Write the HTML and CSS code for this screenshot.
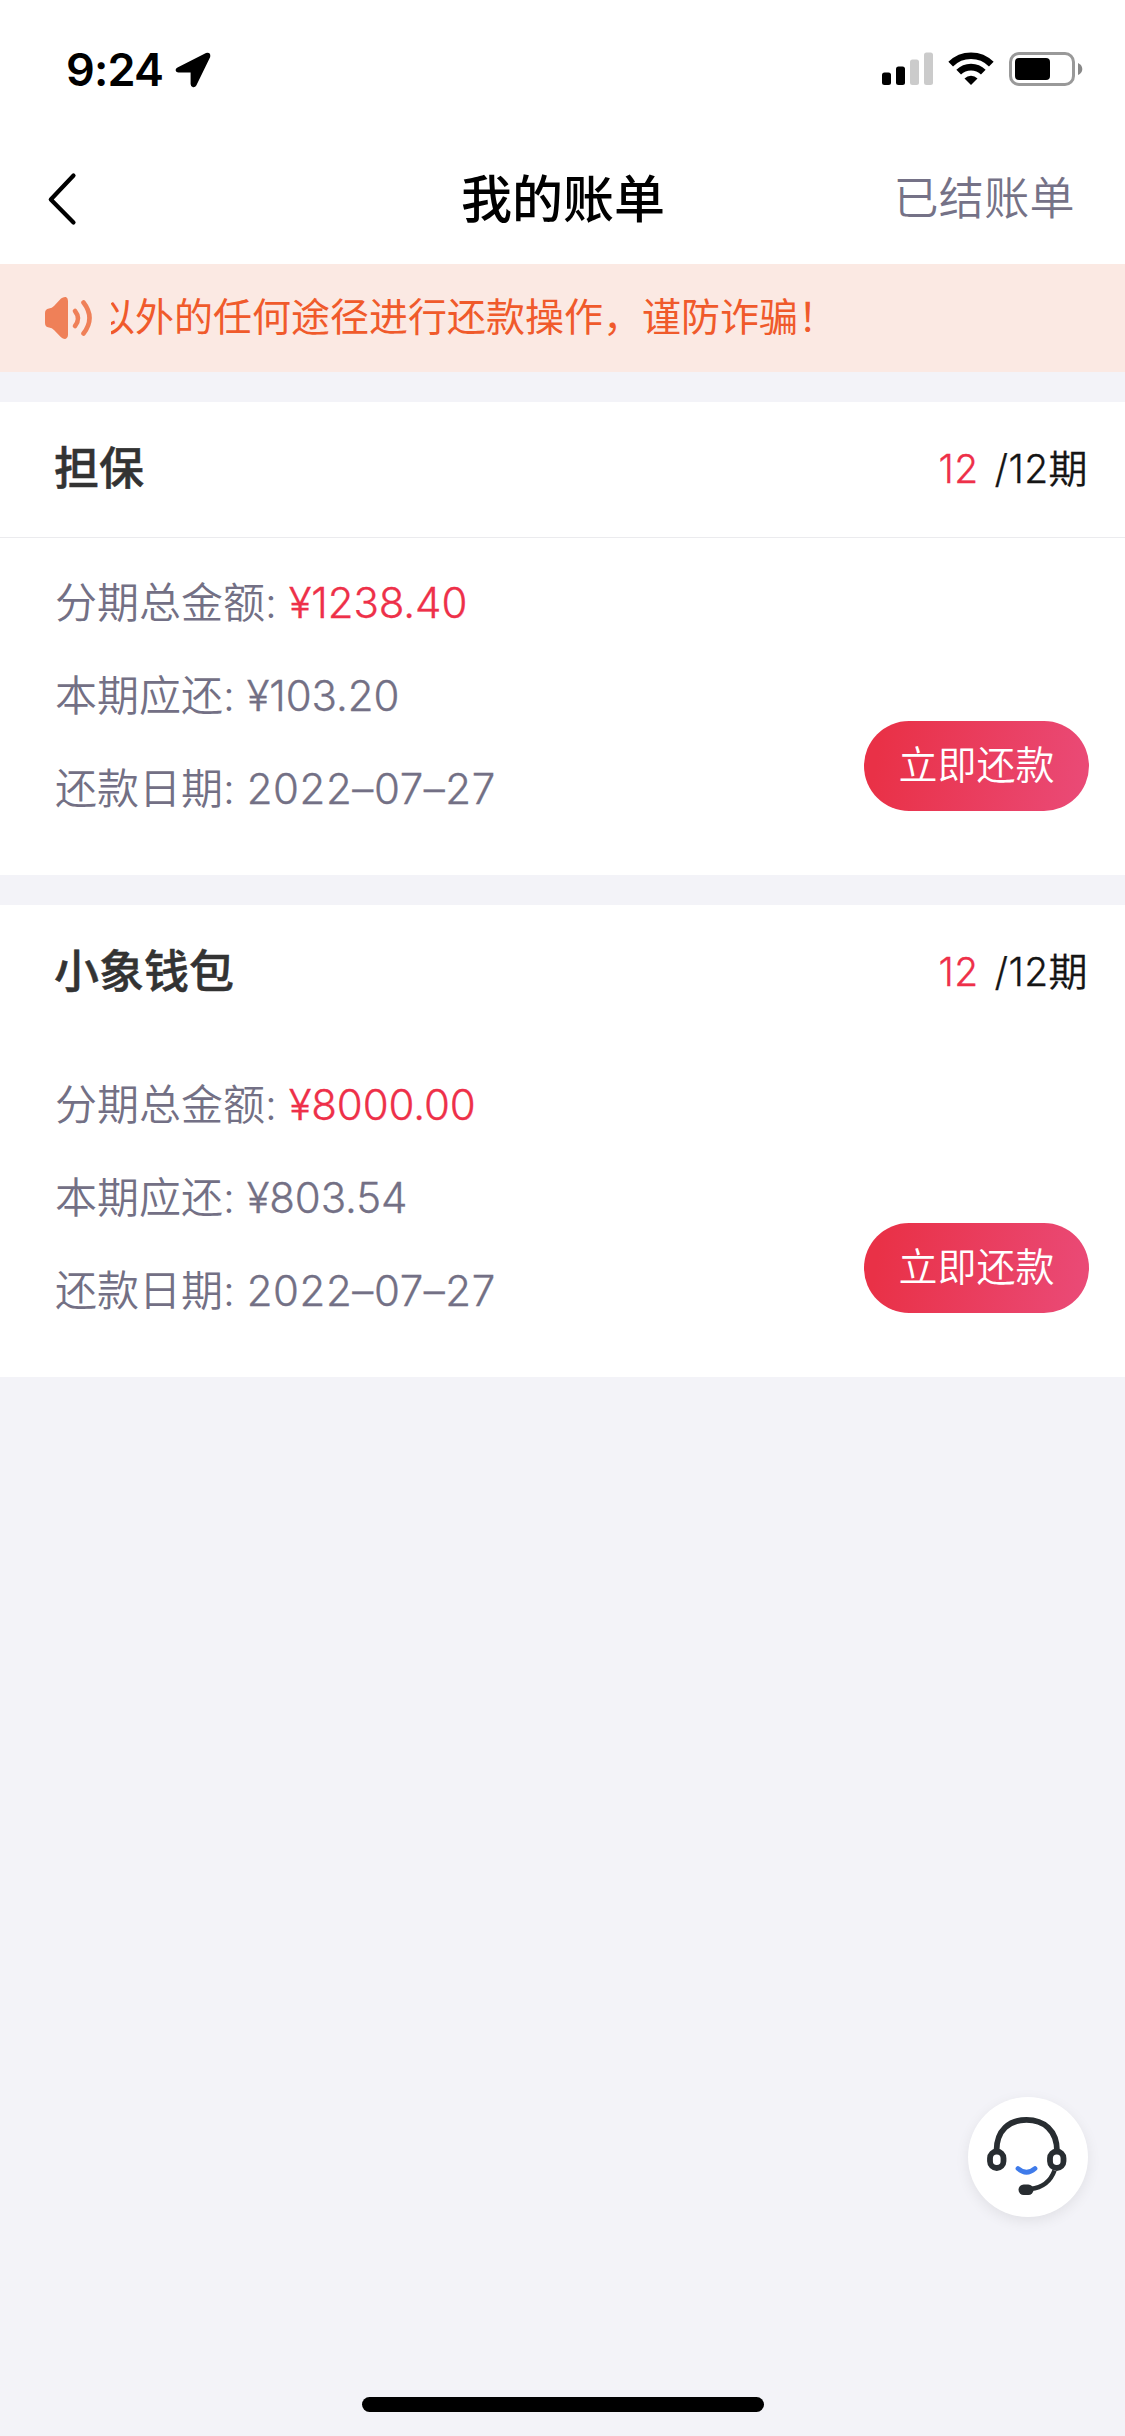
FILE: index.html
```html
<!DOCTYPE html>
<html lang="zh-CN">
<head>
<meta charset="utf-8">
<title>我的账单</title>
<link rel="stylesheet" href="styles.css">
</head>
<body>
<div class="screen">
  <header class="status">
    <div class="status-left">
      <span class="time">9:24</span>
      <svg class="location" width="36" height="36" viewBox="0 0 36 36"><path d="M2.500 15.500 31 1Q36 0 35.200 5L21.300 33.500Q20.300 35.500 18 35.200 15.600 34.800 15.600 32V20.500H3.500Q1 20.500.6 18.300.400 16.500 2.500 15.500Z"/></svg>
    </div>
    <div class="status-right">
      <svg width="51" height="34" viewBox="0 0 51 34"><rect y="20.500" width="9" height="12.500" rx="2.500"/><rect x="14" y="14.500" width="9" height="18.500" rx="2.500"/><g fill="#cbcbcb"><rect x="28" y="7.500" width="9" height="25.500" rx="2.500"/><rect x="42" y=".5" width="9" height="32.500" rx="2.500"/></g></svg>
      <svg width="46" height="34" viewBox="0 0 46 34"><g fill="none" stroke="#000" stroke-width="6.600"><path d="M2.700 12.200a28.700 28.700 0 0 1 40.600 0"/><path d="M10.700 20.200a17.400 17.400 0 0 1 24.600 0"/></g><path d="M23 33l-6.500-6.600a9.200 9.200 0 0 1 13 0Z"/></svg>
      <svg width="74" height="34" viewBox="0 0 74 34"><rect x="1.500" y="1.500" width="63" height="31" rx="8.500" fill="none" stroke="#999" stroke-width="3"/><rect x="6" y="6" width="35" height="22" rx="4"/><path d="M69 11q4.300 2 4.300 6t-4.300 6Z" fill="#888"/></svg>
    </div>
  </header>

  <nav class="nav">
    <svg class="back" width="30" height="54" viewBox="0 0 30 54"><path d="M26.500 3.500 3.800 27.500 26.500 50.500" fill="none" stroke="#000" stroke-width="4.200" stroke-linecap="round" stroke-linejoin="round"/></svg>
    <h1 class="nav-title">我的账单</h1>
    <a class="nav-link">已结账单</a>
  </nav>

  <div class="notice">
    <svg class="speaker" width="48" height="44" viewBox="0 0 48 44"><path d="M0 17q0-4 4-4.500 3-.3 5-2.500l7-7.500Q18.500.5 21 1q2 .8 2 4v34q0 3-2 3.800-2.500.7-5-1.600L9 34q-2-2.200-5-2.500-4-.5-4-4.500Z" fill="#ef8058"/><g fill="none" stroke="#ef8058" stroke-width="4.600" stroke-linecap="round"><path d="M30 15q6 7.500 0 15"/><path d="M38.500 6.500q12 15.500 0 31"/></g></svg>
    <div class="marquee"><p class="notice-text">以外的任何途径进行还款操作，谨防诈骗！</p></div>
  </div>

  <main class="bills">
    <section class="bill">
      <div class="bill-head ruled">
        <h2 class="bill-name">担保</h2>
        <p class="period"><span class="current">12</span>/12期</p>
      </div>
      <div class="bill-body">
        <div class="rows">
          <p>分期总金额: <span class="total">¥1238.40</span></p>
          <p>本期应还: <span>¥103.20</span></p>
          <p>还款日期: <span class="date">2022–07–27</span></p>
        </div>
        <button class="pay">立即还款</button>
      </div>
    </section>
    <section class="bill">
      <div class="bill-head">
        <h2 class="bill-name">小象钱包</h2>
        <p class="period"><span class="current">12</span>/12期</p>
      </div>
      <div class="bill-body">
        <div class="rows">
          <p>分期总金额: <span class="total">¥8000.00</span></p>
          <p>本期应还: <span>¥803.54</span></p>
          <p>还款日期: <span class="date">2022–07–27</span></p>
        </div>
        <button class="pay">立即还款</button>
      </div>
    </section>
  </main>

  <button class="service">
    <svg width="120" height="120" viewBox="0 0 120 120"><g fill="none" stroke="#282d31" stroke-width="5.800"><path d="M28.500 54C28.500 33 41.500 22.800 58.500 22.800S89 33 89 54"/><rect x="22" y="54.500" width="13.500" height="16.500" rx="6.700"/><rect x="82" y="54.500" width="13.500" height="16.500" rx="6.700"/><path d="M86.500 73.500Q80.500 90 62.500 92" stroke-width="4.500"/></g><rect x="50.500" y="87.500" width="15" height="10.500" rx="5.200" fill="#282d31"/><path d="M50 71.500q8.500 7.500 17 0" fill="none" stroke="#3f7bea" stroke-width="4.800" stroke-linecap="round"/></svg>
  </button>
  <div class="home-bar"></div>
</div>
</body>
</html>
```
FILE: styles.css
```css
* { box-sizing: border-box; margin: 0; padding: 0; }

body {
  background: #f3f3f8;
  font-family: Inter, "Noto Sans CJK SC", sans-serif;
  font-weight: 350;
}

svg { display: block; flex: none; }
button { border: 0; font-family: inherit; }

.screen {
  position: relative;
  width: 1125px;
  height: 2436px;
  display: flex;
  flex-direction: column;
  overflow: hidden;
}

/* status bar */
.status {
  height: 132px;
  padding: 0 42px 0 66px;
  display: flex;
  justify-content: space-between;
  align-items: flex-start;
  background: #fff;
}
.status-left { display: flex; align-items: center; gap: 12px; padding-top: 51px; height: 88px; }
.time { font-size: 45px; font-weight: 600; line-height: 37px; letter-spacing: -.8px; }
.status-right { display: flex; gap: 15px; padding-top: 52px; }

/* navigation */
.nav {
  height: 132px;
  padding: 2px 50px 0 47px;
  display: grid;
  grid-template-columns: 1fr auto 1fr;
  align-items: center;
  background: #fff;
}
.nav-title { padding: 1px 0 0 4px; font-size: 51px; font-weight: 500; line-height: 66px; color: #000; }
.nav-link { justify-self: end; font-size: 45px; line-height: 66px; letter-spacing: .4px; color: #757287; }

/* scrolling notice */
.notice {
  height: 108px;
  padding-left: 45px;
  display: flex;
  align-items: center;
  gap: 18px;
  background: #fbe9e3;
  color: #f05a2b;
}
.marquee { flex: 1; overflow: hidden; }
.notice-text { margin-left: -15px; padding-bottom: 3px; font-size: 39px; font-weight: 400; line-height: 60px; white-space: nowrap; }

/* bills */
.bills { padding-top: 30px; display: flex; flex-direction: column; gap: 30px; }
.bill { background: #fff; }
.bill-head {
  height: 135px;
  padding: 0 37px 2px 54px;
  display: flex;
  justify-content: space-between;
  align-items: center;
}
.ruled { height: 136px; border-bottom: 1px solid #ebebee; }
.bill-name { font-size: 45px; font-weight: 500; line-height: 60px; color: #333; -webkit-text-stroke: .5px #333; }
.period { font-size: 39px; line-height: 60px; letter-spacing: .4px; color: #151515; -webkit-text-stroke: .3px; }
.current { margin-right: 16px; color: #ee3049; }
.bill-body {
  height: 337px;
  padding: 18px 36px 0 55px;
  display: flex;
  justify-content: space-between;
}
.rows { font-size: 42px; line-height: 93px; color: #737085; }
.rows span { letter-spacing: -.1px; -webkit-text-stroke: .35px; }
.rows .date { letter-spacing: .6px; }
.rows .total { color: #ee3049; }
.pay {
  align-self: flex-end;
  width: 225px;
  height: 90px;
  margin-bottom: 64px;
  padding-bottom: 8px;
  border-radius: 45px;
  background: linear-gradient(100deg, #e93147 8%, #ea4b78);
  color: #fff;
  font-size: 39px;
  font-weight: 350;
}

/* floating elements */
.service {
  position: absolute;
  left: 967.5px;
  top: 2097px;
  width: 120px;
  height: 120px;
  border-radius: 50%;
  background: #fff;
  box-shadow: 0 4px 14px rgba(0, 0, 0, .08);
}
.home-bar {
  position: absolute;
  left: 362px;
  top: 2397px;
  width: 402px;
  height: 15px;
  border-radius: 8px;
  background: #000;
}
```
